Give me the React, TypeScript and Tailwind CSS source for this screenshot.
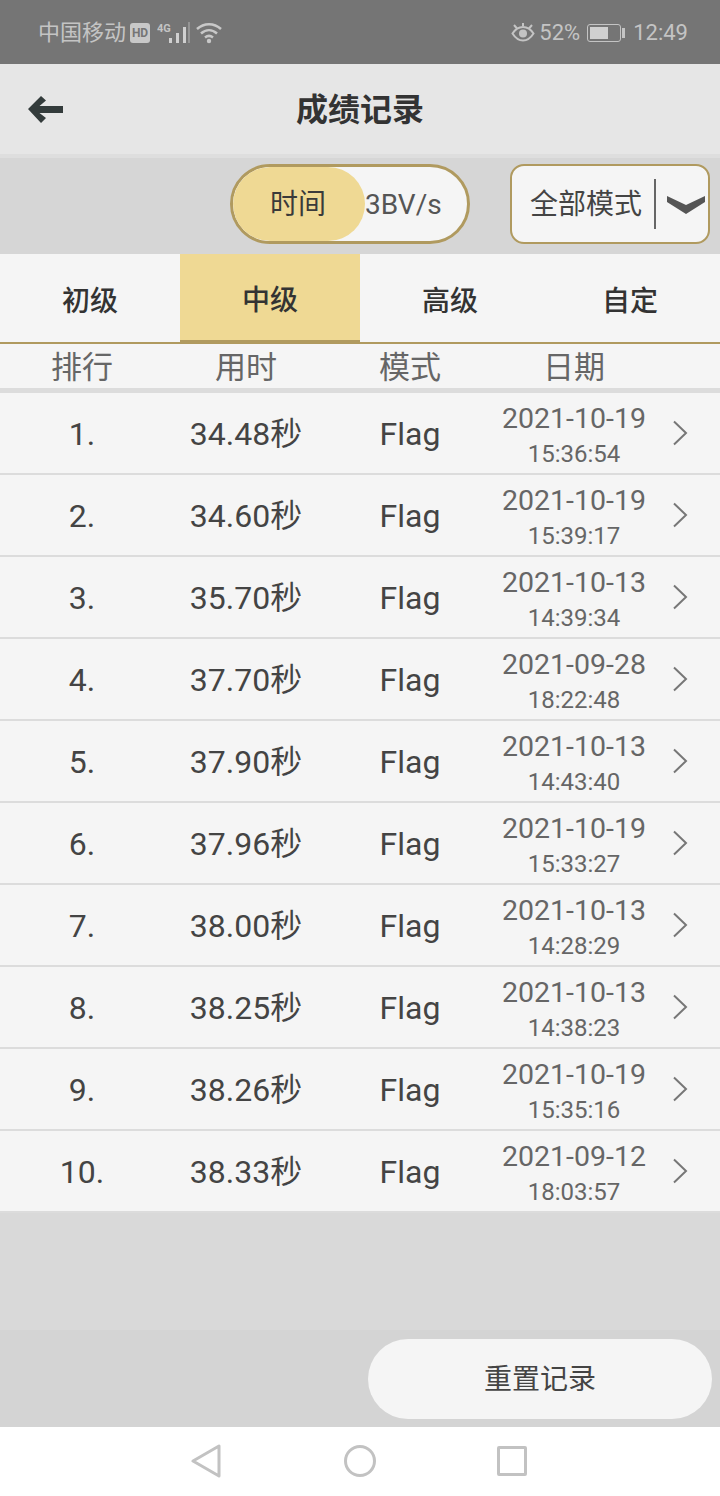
const rows = [
  ['1.', '34.48秒', '2021-10-19', '15:36:54'],
  ['2.', '34.60秒', '2021-10-19', '15:39:17'],
  ['3.', '35.70秒', '2021-10-13', '14:39:34'],
  ['4.', '37.70秒', '2021-09-28', '18:22:48'],
  ['5.', '37.90秒', '2021-10-13', '14:43:40'],
  ['6.', '37.96秒', '2021-10-19', '15:33:27'],
  ['7.', '38.00秒', '2021-10-13', '14:28:29'],
  ['8.', '38.25秒', '2021-10-13', '14:38:23'],
  ['9.', '38.26秒', '2021-10-19', '15:35:16'],
  ['10.', '38.33秒', '2021-09-12', '18:03:57'],
];

const StatusBar = () => (
  <div className="h-[64px] bg-[#757575] flex items-center justify-between pl-[38px] pr-[32px] pt-[2px] text-[#c4c4c4]">
    <div className="flex items-center">
      <span className="text-[22px] leading-none">中国移动</span>
      <span className="ml-[4px] w-[20px] h-[20px] rounded-[3px] bg-[#c8c8c8] text-[#757575] text-[12px] font-bold leading-[20px] text-center">HD</span>
      <svg width="34" height="22" viewBox="0 0 34 22" className="ml-[7px]">
        <text x="0" y="10" fontSize="11" fontWeight="700" fill="#c4c4c4">4G</text>
        <rect x="12" y="16" width="3" height="5" fill="#d0d0d0" />
        <rect x="19" y="11" width="3" height="10" fill="#d0d0d0" />
        <rect x="26" y="5" width="3" height="16" fill="#d0d0d0" />
        <rect x="31" y="0" width="2" height="21" fill="#959595" />
      </svg>
      <svg width="26" height="22" viewBox="0 0 26 22" className="ml-[5px]" fill="none" stroke="#c8c8c8" strokeWidth="2.500">
        <path d="M1 7c7-6.500 17-6.500 24 0" />
        <path d="M5 11.500c5-4.500 11-4.500 16 0" />
        <path d="M9 15.500c2.500-2 5.500-2 8 0" />
        <circle cx="13" cy="19" r="2.200" fill="#c8c8c8" stroke="none" />
      </svg>
    </div>
    <div className="flex items-center">
      <svg width="24" height="22" viewBox="0 0 24 22" fill="none" stroke="#c4c4c4" strokeWidth="2">
        <path d="M1.500 11.500C5 6 8 5 12 5s7 1 10.500 6.500C19 17 16 18.500 12 18.500S5 17 1.500 11.500Z" />
        <circle cx="12" cy="11.500" r="4" fill="#c4c4c4" stroke="none" />
        <path d="M3 3l3 3.500M21 3l-3 3.500M12 1v3" />
      </svg>
      <span className="ml-[4px] text-[22px] leading-none">52%</span>
      <div className="ml-[7px] w-[34px] h-[18px] rounded-[3px] border border-[#c4c4c4] p-[2px]">
        <div className="w-[18px] h-full bg-[#d0d0d0]" />
      </div>
      <div className="ml-[1px] w-[3px] h-[10px] bg-[#c4c4c4]" />
      <span className="ml-[8px] text-[22px] leading-none">12:49</span>
    </div>
  </div>
);

const Header = () => (
  <div className="h-[90px] bg-[#e6e6e6] flex items-center justify-center pt-[2px] relative">
    <svg width="38" height="30" viewBox="0 0 38 30" className="absolute left-[27px] top-[30px]" fill="#333b3b">
      <path d="M1 15 14 2l5 4.500L12.500 12H36v7H12.500L19 24l-5 5Z" />
    </svg>
    <span className="text-[32px] font-bold text-[#333333] leading-none">成绩记录</span>
  </div>
);

const Toolbar = () => (
  <div className="h-[100px] bg-[#d6d6d6] border-t-[4px] border-[#dedede] flex items-center justify-end pr-[10px] pb-[4px]">
    <div className="w-[240px] h-[80px] rounded-full border-[3px] border-[#b09a5f] bg-[#f5f5f5] flex items-center overflow-hidden">
      <div className="w-[132px] h-full rounded-full bg-[#efd994] flex items-center justify-center pt-[2px] pr-[2px] text-[28px] text-[#3a3a3a]">时间</div>
      <span className="pt-[2px] text-[28px] text-[#555555]">3BV/s</span>
    </div>
    <div className="ml-[40px] w-[200px] h-[80px] rounded-[14px] border-[2px] border-[#b09a5f] bg-[#f5f5f5] flex items-center">
      <span className="pl-[18px] pt-[2px] text-[28px] text-[#444444] whitespace-nowrap">全部模式</span>
      <div className="ml-[12px] w-[2px] h-[50px] bg-[#666666]" />
      <svg width="40" height="22" viewBox="0 0 40 22" className="ml-[10px]" fill="#555555">
        <path d="M1 3l19 9 19-9v6L20 21 1 9Z" />
      </svg>
    </div>
  </div>
);

const Tabs = () => (
  <div className="h-[90px] bg-[#f5f5f5] border-b-[2px] border-[#b09a5f] flex text-[28px] font-medium text-[#333333]">
    <div className="w-[180px] pt-[8px] flex items-center justify-center">初级</div>
    <div className="w-[180px] pt-[8px] bg-[#efd994] border-b-[2px] border-[#b09a5f] flex items-center justify-center">中级</div>
    <div className="w-[180px] pt-[8px] flex items-center justify-center">高级</div>
    <div className="w-[180px] pt-[8px] flex items-center justify-center">自定</div>
  </div>
);

const ColHead = () => (
  <div className="h-[49px] bg-[#f5f5f5] border-b-[5px] border-[#dcdcdc] flex items-center pt-[4px] text-[31px] text-[#666666]">
    <div className="w-[164px] text-center">排行</div>
    <div className="w-[164px] text-center">用时</div>
    <div className="w-[164px] text-center">模式</div>
    <div className="w-[164px] text-center">日期</div>
  </div>
);

const Row = ({ rank, time, date, clock }: { rank: string; time: string; date: string; clock: string }) => (
  <div className="h-[82px] bg-[#f5f5f5] border-b-[2px] border-[#dcdcdc] flex items-center">
    <div className="w-[164px] pt-[2px] text-center text-[32px] text-[#444444]">{rank}</div>
    <div className="w-[164px] pt-[2px] text-center text-[32px] text-[#444444] whitespace-nowrap">{time}</div>
    <div className="w-[164px] pt-[2px] text-center text-[32px] text-[#444444]">Flag</div>
    <div className="w-[164px] pt-[5px] flex flex-col items-center text-[#666666]">
      <span className="text-[28.500px] leading-[36px]">{date}</span>
      <span className="text-[24px] leading-[34px]">{clock}</span>
    </div>
    <svg width="16" height="26" viewBox="0 0 16 26" className="ml-[16px]" fill="none" stroke="#777777" strokeWidth="2">
      <path d="M2 1.500 14 13 2 24.500" />
    </svg>
  </div>
);

const Footer = () => (
  <div className="h-[97px] bg-[#d4d4d4] flex items-center justify-end pl-[368px] pr-[8px]">
    <div className="w-full h-[80px] rounded-full bg-[#f5f5f5] flex items-center justify-center pt-[2px] text-[28px] text-[#444444]">重置记录</div>
  </div>
);

const NavBar = () => (
  <div className="h-[69px] bg-white flex items-center justify-center pb-[1px] pr-[2px]">
    <svg width="30" height="34" viewBox="0 0 30 34" fill="none" stroke="#c2c2c2" strokeWidth="3" strokeLinejoin="round">
      <path d="M28 2v30L2 17Z" />
    </svg>
    <svg width="34" height="34" viewBox="0 0 34 34" className="ml-[122px]" fill="none" stroke="#c2c2c2" strokeWidth="3">
      <circle cx="17" cy="17" r="14.500" />
    </svg>
    <div className="ml-[120px] w-[30px] h-[30px] rounded-[2px] border-[3px] border-[#c2c2c2]" />
  </div>
);

export default function App() {
  return (
    <div className="w-[720px] h-[1496px] flex flex-col bg-[#d9d9d9] font-['Roboto','Noto_Sans_CJK_SC',sans-serif]">
      <StatusBar />
      <Header />
      <Toolbar />
      <Tabs />
      <ColHead />
      <div>
        {rows.map(r => (
          <Row key={r[0]} rank={r[0]} time={r[1]} date={r[2]} clock={r[3]} />
        ))}
      </div>
      <div className="flex-1" />
      <Footer />
      <NavBar />
    </div>
  );
}
